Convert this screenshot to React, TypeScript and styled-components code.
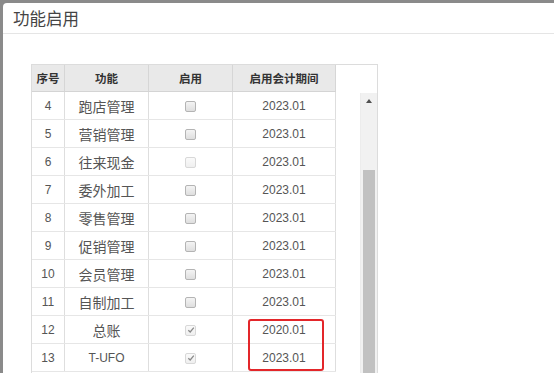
import React from "react";
import styled, { createGlobalStyle } from "styled-components";

type Row = {
  no: number;
  name: string;
  state: "off" | "disabled" | "checked";
  period: string;
};

const ROWS: Row[] = [
  { no: 4, name: "跑店管理", state: "off", period: "2023.01" },
  { no: 5, name: "营销管理", state: "off", period: "2023.01" },
  { no: 6, name: "往来现金", state: "disabled", period: "2023.01" },
  { no: 7, name: "委外加工", state: "off", period: "2023.01" },
  { no: 8, name: "零售管理", state: "off", period: "2023.01" },
  { no: 9, name: "促销管理", state: "off", period: "2023.01" },
  { no: 10, name: "会员管理", state: "off", period: "2023.01" },
  { no: 11, name: "自制加工", state: "off", period: "2023.01" },
  { no: 12, name: "总账", state: "checked", period: "2020.01" },
  { no: 13, name: "T-UFO", state: "checked", period: "2023.01" },
];

const COLS = "33px 84px 84px 103px";

const GlobalStyle = createGlobalStyle`
  html, body {
    margin: 0;
    padding: 0;
    overflow: hidden;
    background: #8a8a8a;
  }
  body {
    font-family: "Liberation Sans", "Noto Sans CJK SC", sans-serif;
  }
`;

const Backdrop = styled.div`
  width: 554px;
  height: 373px;
  padding: 3px 0 0 3px;
  box-sizing: border-box;
  overflow: hidden;
`;

const Modal = styled.div`
  width: 600px;
  height: 400px;
  background: #fff;
  border-radius: 4px 0 0 0;
`;

const ModalHeader = styled.div`
  height: 30px;
  border-bottom: 1px solid #e5e5e5;
  display: flex;
  align-items: center;
  padding-left: 10px;
`;

const Title = styled.h4`
  margin: 0;
  font-family: "Noto Sans CJK SC", sans-serif;
  font-size: 16.5px;
  line-height: 20px;
  font-weight: 400;
  color: #444;
`;

const ModalBody = styled.div`
  padding: 30px 0 0 28px;
`;

const GridFrame = styled.div`
  position: relative;
  display: flex;
  width: 345px;
  border: 1px solid #dcdcdc;
  border-bottom: none;
  background: #fff;
`;

const Grid = styled.div`
  width: 304px;
  display: flex;
  flex-direction: column;
`;

const HeadRow = styled.div`
  display: grid;
  grid-template-columns: ${COLS};
  height: 27px;
  background: #e9e9e9;
  border-bottom: 1px solid #d4d4d4;
  box-sizing: border-box;
`;

const HeadCell = styled.div`
  display: flex;
  align-items: center;
  justify-content: center;
  border-right: 1px solid #d6d6d6;
  font-family: "Noto Sans CJK SC", sans-serif;
  font-size: 11.5px;
  font-weight: 700;
  color: #333;
`;

const BodyRow = styled.div`
  display: grid;
  grid-template-columns: ${COLS};
  height: 28px;
  border-bottom: 1px solid #e6e6e6;
  box-sizing: border-box;
`;

const Cell = styled.div<{ $cjk?: boolean }>`
  display: flex;
  align-items: center;
  justify-content: center;
  border-right: 1px solid #dedede;
  color: #555;
  font-family: ${(p) =>
    p.$cjk ? '"Noto Sans CJK SC", sans-serif' : '"Liberation Sans", sans-serif'};
  font-size: ${(p) => (p.$cjk ? "14px" : "12px")};
`;

const Box = styled.span<{ $state: Row["state"] }>`
  display: inline-flex;
  align-items: center;
  justify-content: center;
  width: 11px;
  height: 11px;
  margin-top: 1px;
  box-sizing: border-box;
  border-radius: 2px;
  border: 1px solid ${(p) => (p.$state === "off" ? "#b4b4b4" : "#d8d8d8")};
  background: ${(p) =>
    p.$state === "off"
      ? "linear-gradient(#f4f4f4, #dedede)"
      : "linear-gradient(#fafafa, #efefef)"};
`;

const ScrollLane = styled.div`
  flex: 1;
  display: flex;
  flex-direction: column;
  align-items: flex-end;
`;

const Track = styled.div`
  margin-top: 28px;
  width: 16px;
  height: 300px;
  background: #f1f1f1;
  border-left: 1px solid #ececec;
  display: flex;
  flex-direction: column;
  align-items: center;
`;

const Arrow = styled.div`
  margin-top: 6px;
  width: 0;
  height: 0;
  border-left: 3px solid transparent;
  border-right: 3px solid transparent;
  border-bottom: 4px solid #505050;
`;

const Thumb = styled.div`
  margin-top: 67px;
  width: 12px;
  flex: 1;
  background: #c1c1c1;
`;

const Highlight = styled.div`
  position: absolute;
  left: 216px;
  top: 254px;
  width: 76px;
  height: 52px;
  box-sizing: border-box;
  border: 2px solid #e3262a;
  border-radius: 3px;
  pointer-events: none;
`;

function CheckMark() {
  return (
    <svg width="8" height="8" viewBox="0 0 8 8">
      <path d="M1.3 4.2 L3.2 6 L6.8 1.6" fill="none" stroke="#8a8a8a" strokeWidth="1.3" />
    </svg>
  );
}

export default function App() {
  return (
    <>
      <GlobalStyle />
      <Backdrop>
        <Modal>
          <ModalHeader>
            <Title>功能启用</Title>
          </ModalHeader>
          <ModalBody>
            <GridFrame>
              <Grid>
                <HeadRow>
                  <HeadCell>序号</HeadCell>
                  <HeadCell>功能</HeadCell>
                  <HeadCell>启用</HeadCell>
                  <HeadCell>启用会计期间</HeadCell>
                </HeadRow>
                {ROWS.map((r) => (
                  <BodyRow key={r.no}>
                    <Cell>{r.no}</Cell>
                    <Cell $cjk={!/^[A-Za-z]/.test(r.name)}>{r.name}</Cell>
                    <Cell>
                      <Box $state={r.state}>{r.state === "checked" && <CheckMark />}</Box>
                    </Cell>
                    <Cell>{r.period}</Cell>
                  </BodyRow>
                ))}
              </Grid>
              <ScrollLane>
                <Track>
                  <Arrow />
                  <Thumb />
                </Track>
              </ScrollLane>
              <Highlight />
            </GridFrame>
          </ModalBody>
        </Modal>
      </Backdrop>
    </>
  );
}
